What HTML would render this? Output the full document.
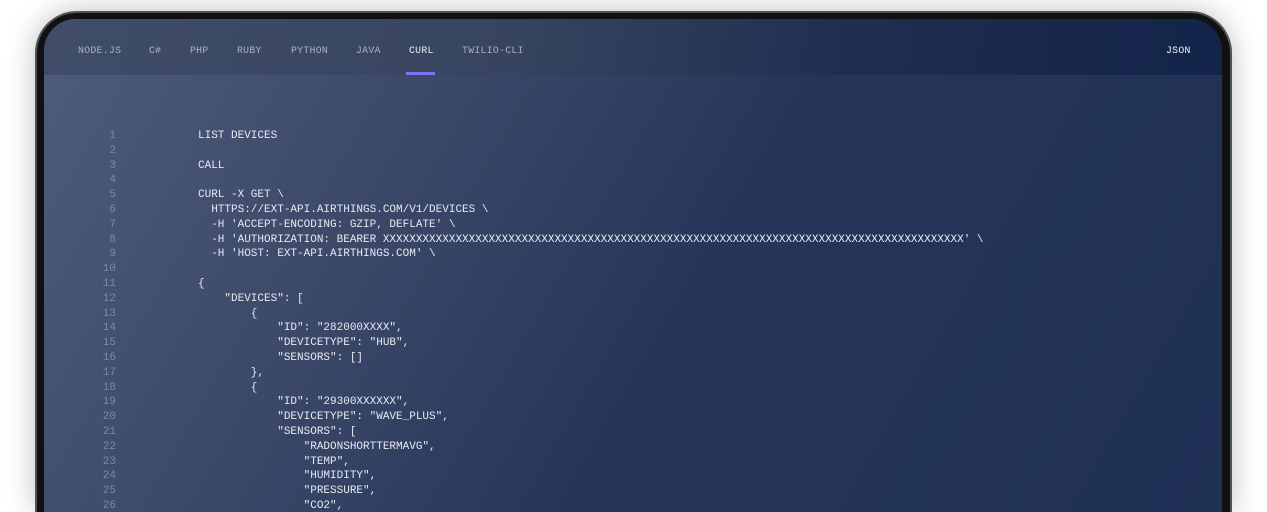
<!DOCTYPE html><html><head><style>
html,body{margin:0;width:1267px;height:512px;overflow:hidden}
body{background:#fff;position:relative;font-family:"Liberation Mono",monospace}
.frame{position:absolute;left:35px;top:11px;width:1197px;height:501px;border-radius:42px 42px 0 0;background:#111;border:2px solid #4e5655;border-bottom:none;box-sizing:border-box;box-shadow:0 0 28px rgba(0,0,0,.25)}
.screen{position:absolute;left:44px;top:19px;width:1178px;height:493px;border-radius:32px 32px 0 0;overflow:hidden;background:linear-gradient(120deg,#4f5c7a 0%,#3b4868 30%,#26365a 55%,#1f3055 100%)}
.nav{position:absolute;left:0;top:0;width:100%;height:56px;background:linear-gradient(100deg,#404d69 0%,#37445f 40%,#1e2d50 70%,#13244a 100%)}
.tab{position:absolute;top:26px;font-size:9.8px;color:#a9b1c6;letter-spacing:.3px}
.ul{position:absolute;left:362px;top:53px;width:29px;height:3px;background:#7b74f0}
pre{position:absolute;left:154px;top:110px;margin:0;font-size:11px;line-height:14.8px;color:#e6e9f1;font-family:"Liberation Mono",monospace}
pre.nums{left:40px;width:32px;font-size:11px;color:#7e89a5;text-align:right}
</style></head><body>
<div class="frame"></div>
<div class="screen">
<div class="nav">
<span class="tab" style="left:34px">NODE.JS</span>
<span class="tab" style="left:105px">C#</span>
<span class="tab" style="left:146px">PHP</span>
<span class="tab" style="left:193px">RUBY</span>
<span class="tab" style="left:247px">PYTHON</span>
<span class="tab" style="left:312px">JAVA</span>
<span class="tab" style="left:365px;color:#eef0f6">CURL</span>
<span class="tab" style="left:418px">TWILIO-CLI</span>
<span class="tab" style="left:1122px;color:#eef0f6">JSON</span>
<div class="ul"></div>
</div>
<pre class="nums">1
2
3
4
5
6
7
8
9
10
11
12
13
14
15
16
17
18
19
20
21
22
23
24
25
26</pre>
<pre>LIST DEVICES

CALL

CURL -X GET \
  HTTPS://EXT-API.AIRTHINGS.COM/V1/DEVICES \
  -H 'ACCEPT-ENCODING: GZIP, DEFLATE' \
  -H 'AUTHORIZATION: BEARER XXXXXXXXXXXXXXXXXXXXXXXXXXXXXXXXXXXXXXXXXXXXXXXXXXXXXXXXXXXXXXXXXXXXXXXXXXXXXXXXXXXXXXXX' \
  -H 'HOST: EXT-API.AIRTHINGS.COM' \

{
    "DEVICES": [
        {
            "ID": "282000XXXX",
            "DEVICETYPE": "HUB",
            "SENSORS": []
        },
        {
            "ID": "29300XXXXXX",
            "DEVICETYPE": "WAVE_PLUS",
            "SENSORS": [
                "RADONSHORTTERMAVG",
                "TEMP",
                "HUMIDITY",
                "PRESSURE",
                "CO2",</pre>
</div>
</body></html>
